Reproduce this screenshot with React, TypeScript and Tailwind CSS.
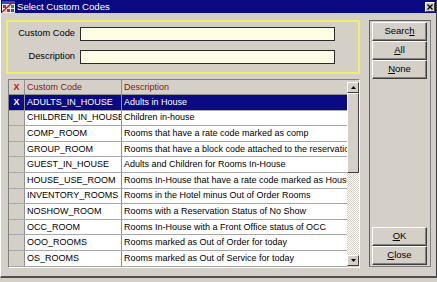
import React from "react";

const rows = [
  { code: "ADULTS_IN_HOUSE", desc: "Adults in House", selected: true },
  { code: "CHILDREN_IN_HOUSE", desc: "Children in-house" },
  { code: "COMP_ROOM", desc: "Rooms that have a rate code marked as comp" },
  { code: "GROUP_ROOM", desc: "Rooms that have a block code attached to the reservation" },
  { code: "GUEST_IN_HOUSE", desc: "Adults and Children for Rooms In-House" },
  { code: "HOUSE_USE_ROOM", desc: "Rooms In-House that have a rate code marked as House Use" },
  { code: "INVENTORY_ROOMS", desc: "Rooms in the Hotel minus Out of Order Rooms" },
  { code: "NOSHOW_ROOM", desc: "Rooms with a Reservation Status of No Show" },
  { code: "OCC_ROOM", desc: "Rooms In-House with a Front Office status of OCC" },
  { code: "OOO_ROOMS", desc: "Rooms marked as Out of Order for today" },
  { code: "OS_ROOMS", desc: "Rooms marked as Out of Service for today" },
];

function Btn({ children, className = "" }: { children: React.ReactNode; className?: string }) {
  return (
    <div
      className={
        "w-[55px] h-[19px] flex items-center justify-center text-[9.5px] text-black bg-[#d4d0c8] border border-t-white border-l-white border-r-[#404040] border-b-[#404040] shadow-[inset_-1px_-1px_0_#808080] " +
        className
      }
    >
      {children}
    </div>
  );
}

function Field({ label }: { label: string }) {
  return (
    <div className="flex items-center h-[14px]">
      <div className="w-[67px] text-right text-[9.3px] text-black">{label}</div>
      <div className="ml-[5px] w-[255px] h-[14px] bg-[#fffde4] border border-[#2a2a2a]" />
    </div>
  );
}

export default function App() {
  return (
    <div className="w-[437px] h-[282px] bg-[#d4d0c8] font-['Liberation_Sans',Arial,sans-serif] overflow-hidden">
      <div className="h-[278px] flex flex-col border-l border-l-white border-r border-r-[#404040] border-b-2 border-b-[#505050]">
        {/* title bar */}
        <div className="h-[13px] bg-[#0a0a82] flex items-center pl-[1px] pr-[1px]">
          <svg width="13" height="12" viewBox="0 0 13 12" className="shrink-0">
            <rect x="0" y="0" width="13" height="12" fill="#e8e8f0" />
            <rect x="0" y="0" width="13" height="3" fill="#3050c0" />
            <rect x="1" y="4" width="3" height="3" fill="#d02020" />
            <rect x="5" y="4" width="3" height="3" fill="#f0c030" />
            <rect x="9" y="4" width="3" height="3" fill="#20a040" />
            <rect x="1" y="8" width="3" height="3" fill="#f0c030" />
            <rect x="5" y="8" width="3" height="3" fill="#d02020" />
            <rect x="9" y="8" width="3" height="3" fill="#3050c0" />
            <path d="M0 11 L11 1" stroke="#b01818" strokeWidth="1.2" />
          </svg>
          <span className="ml-[2px] text-[9.6px] text-white leading-none">Select Custom Codes</span>
          <div className="ml-auto w-[10px] h-[10px] bg-[#d4d0c8] border border-t-white border-l-white border-r-[#404040] border-b-[#404040] flex items-center justify-center">
            <svg width="6" height="6" viewBox="0 0 6 6">
              <path d="M0.5 0.5 L5.5 5.5 M5.5 0.5 L0.5 5.5" stroke="#000" strokeWidth="1.3" />
            </svg>
          </div>
        </div>

        {/* body */}
        <div className="flex pt-[7px] pl-[5px]">
          <div className="w-[354px] flex flex-col">
            <div className="h-[54px] border-2 border-[#f2ee6c] pt-[5px] flex flex-col gap-[9px]">
              <Field label="Custom Code" />
              <Field label="Description" />
            </div>

            <div className="mt-[5px] ml-[2px] w-[352px] h-[189px] flex border-t border-l border-[#808080] border-r border-r-white border-b border-b-white">
              <div className="w-[338px] flex flex-col text-[9px] leading-none">
                <div className="h-[15px] flex shrink-0 bg-[#d4d0c8] border-b border-[#909090]">
                  <div className="w-[16px] flex items-center justify-center font-bold text-[#c01010] border-r border-[#909090]">X</div>
                  <div className="w-[97px] flex items-center pl-[2px] text-[#8a1414] border-r border-[#909090]">Custom Code</div>
                  <div className="flex-1 flex items-center pl-[2px] text-[#8a1414]">Description</div>
                </div>
                {rows.map((r) => (
                  <div
                    key={r.code}
                    className={
                      "h-[15.6px] flex shrink-0 border-b border-[#a8a8a8] " +
                      (r.selected ? "bg-[#0a0a82] text-white" : "bg-white text-black")
                    }
                  >
                    <div
                      className={
                        "w-[16px] flex items-center justify-center font-bold border-r border-[#909090] " +
                        (r.selected ? "bg-[#0a0a82] text-white" : "bg-[#d4d0c8]")
                      }
                    >
                      {r.selected ? "X" : ""}
                    </div>
                    <div className="w-[97px] flex items-center pl-[2px] border-r border-[#909090] overflow-hidden whitespace-nowrap">
                      {r.code}
                    </div>
                    <div className="flex-1 flex items-center pl-[2px] overflow-hidden whitespace-nowrap">{r.desc}</div>
                  </div>
                ))}
              </div>

              {/* scrollbar */}
              <div className="w-[12px] flex flex-col pt-[2px] pb-[1px]">
                <div className="h-[11px] bg-[#d4d0c8] border border-t-white border-l-white border-r-[#404040] border-b-[#404040] flex items-center justify-center">
                  <svg width="5" height="3" viewBox="0 0 5 3">
                    <path d="M0 3 L2.5 0 L5 3 Z" fill="#000" />
                  </svg>
                </div>
                <div className="h-[80px] bg-[#d4d0c8] border border-t-white border-l-white border-r-[#404040] border-b-[#404040]" />
                <div className="flex-1 bg-[repeating-conic-gradient(#ffffff_0%_25%,#d4d0c8_0%_50%)] bg-[length:2px_2px]" />
                <div className="h-[11px] bg-[#d4d0c8] border border-t-white border-l-white border-r-[#404040] border-b-[#404040] flex items-center justify-center">
                  <svg width="5" height="3" viewBox="0 0 5 3">
                    <path d="M0 0 L2.5 3 L5 0 Z" fill="#000" />
                  </svg>
                </div>
              </div>
            </div>
          </div>

          {/* buttons panel */}
          <div className="ml-[9px] w-[62px] h-[247px] border border-[#606060] border-r-[#808080] border-b-[#808080] p-[1px] pl-[2px] flex flex-col">
            <Btn>
              Searc<span className="underline">h</span>
            </Btn>
            <Btn>
              <span className="underline">A</span>ll
            </Btn>
            <Btn>
              <span className="underline">N</span>one
            </Btn>
            <div className="flex-1" />
            <Btn>
              <span className="underline">O</span>K
            </Btn>
            <Btn>
              <span className="underline">C</span>lose
            </Btn>
          </div>
        </div>
      </div>
    </div>
  );
}
